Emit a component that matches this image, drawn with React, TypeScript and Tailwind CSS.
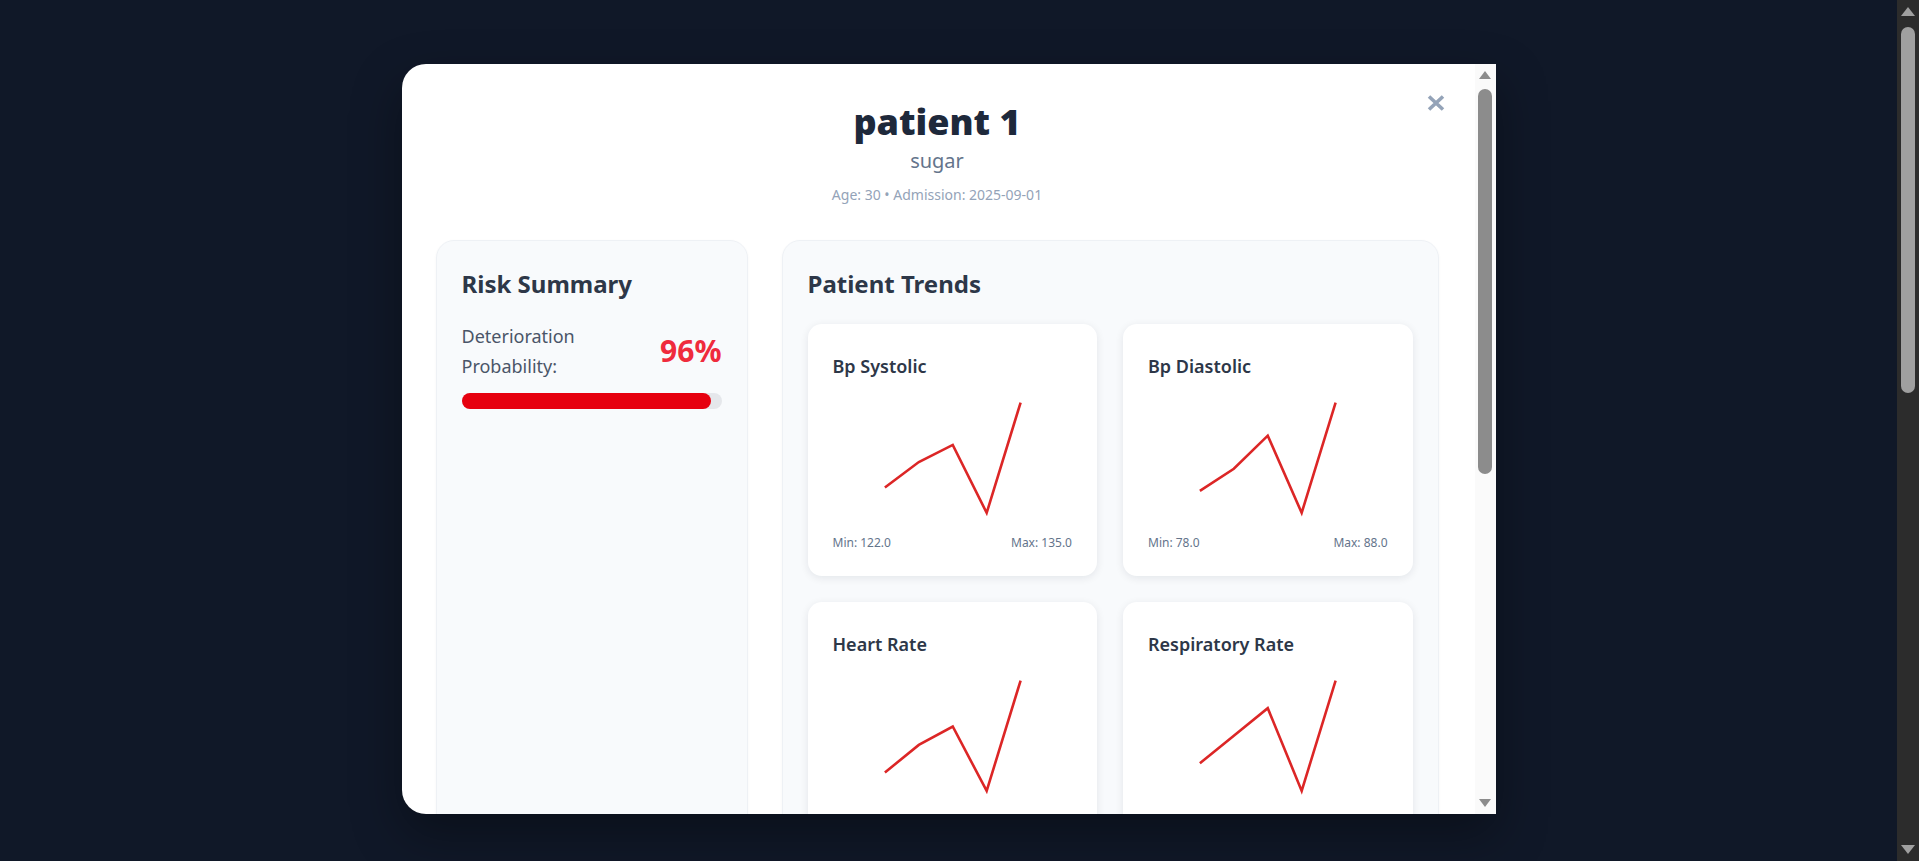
import React from "react";

type Metric = { name: string; values: number[] };

const metrics: Metric[] = [
  { name: "Bp Systolic", values: [125, 128, 130, 122, 135] },
  { name: "Bp Diastolic", values: [80, 82, 85, 78, 88] },
  { name: "Heart Rate", values: [80, 86, 90, 76, 100] },
  { name: "Respiratory Rate", values: [18, 20, 22, 16, 24] },
];

function Sparkline({ values }: { values: number[] }) {
  const min = Math.min(...values);
  const max = Math.max(...values);
  const pts = values
    .map((v, i) => {
      const x = 52 + i * 34;
      const y = 135 - ((v - min) / (max - min)) * 110.6;
      return `${x},${y.toFixed(1)}`;
    })
    .join(" ");
  return (
    <svg width="240" height="157" viewBox="0 0 240 157" className="block h-[157px] w-full">
      <polyline points={pts} fill="none" stroke="#dc2626" strokeWidth="2.6" strokeLinejoin="miter" />
    </svg>
  );
}

function TrendCard({ m }: { m: Metric }) {
  const min = Math.min(...m.values);
  const max = Math.max(...m.values);
  return (
    <div className="rounded-[14px] bg-white px-[25px] pb-[25px] pt-[30px] shadow-[0_2px_8px_rgba(15,23,42,0.09)]">
      <div className="text-[18px] font-semibold leading-[24px] text-[#2d3748]">{m.name}</div>
      <Sparkline values={m.values} />
      <div className="flex justify-between text-[12px] leading-[16px] text-[#64748b]">
        <span>Min: {min.toFixed(1)}</span>
        <span>Max: {max.toFixed(1)}</span>
      </div>
    </div>
  );
}

function ModalScrollbar() {
  return (
    <div className="flex w-[21px] shrink-0 flex-col items-center bg-[#fafafa]">
      <div className="mt-[7px] h-0 w-0 border-b-[8px] border-l-[6px] border-r-[6px] border-b-[#8c8c8c] border-l-transparent border-r-transparent" />
      <div className="mt-[10px] h-[385px] w-[14px] rounded-full bg-[#8c8c8c]" />
      <div className="mb-[7px] mt-auto h-0 w-0 border-l-[6px] border-r-[6px] border-t-[8px] border-l-transparent border-r-transparent border-t-[#8c8c8c]" />
    </div>
  );
}

function PageScrollbar() {
  return (
    <div className="flex h-full w-[22px] shrink-0 flex-col items-center bg-[#2c2c2c]">
      <div className="mt-[7px] h-0 w-0 border-b-[9px] border-l-[7px] border-r-[7px] border-b-[#a0a0a0] border-l-transparent border-r-transparent" />
      <div className="mt-[11px] h-[366px] w-[14px] rounded-full bg-[#a0a0a0]" />
      <div className="mb-[7px] mt-auto h-0 w-0 border-l-[7px] border-r-[7px] border-t-[9px] border-l-transparent border-r-transparent border-t-[#a0a0a0]" />
    </div>
  );
}

export default function App() {
  return (
    <div
      className="flex h-screen overflow-hidden bg-[#101828]"
      style={{ fontFamily: '"Noto Sans", "Open Sans", sans-serif' }}
    >
      <div className="flex flex-1 items-start justify-center pt-[64px]">
        <div className="flex h-[750px] w-[1094px] overflow-hidden rounded-l-[24px] bg-white shadow-[0_20px_50px_rgba(0,0,0,0.35)]">
          <div className="relative flex-1 overflow-hidden">
            <button className="absolute right-[30px] top-[31px] text-[#94a3b8]" aria-label="Close">
              <svg width="18" height="16" viewBox="0 0 18 16" className="block">
                <path d="M2 1.5 L16 14.5 M16 1.5 L2 14.5" stroke="#94a3b8" strokeWidth="3.6" fill="none" />
              </svg>
            </button>
            <div className="pl-[34px] pr-[36px] pt-[36px]">
              <div className="flex flex-col items-center text-center">
                <h2 className="text-[36px] font-black leading-[44px] text-[#1e293b]">patient 1</h2>
                <div className="mt-[3px] text-[20px] leading-[28px] text-[#64748b]">sugar</div>
                <div className="mt-[10px] text-[14px] leading-[20px] text-[#94a3b8]">
                  Age: 30 • Admission: 2025-09-01
                </div>
              </div>

              <div className="mt-[35px] flex items-stretch gap-[34px]">
                <div className="w-[312px] shrink-0 rounded-[18px] border border-[#eef1f5] bg-[#f8fafc] px-[25px] pt-[25px] shadow-[0_1px_3px_rgba(15,23,42,0.04)]">
                  <h3 className="text-[24px] font-bold leading-[36px] text-[#2d3748]">Risk Summary</h3>
                  <div className="mt-[19px] flex items-center justify-between gap-2">
                    <span className="text-[18px] leading-[30px] text-[#4a5568]">Deterioration Probability:</span>
                    <span className="text-[30px] font-bold leading-none text-[#ef2b3c]">96%</span>
                  </div>
                  <div className="mt-[12px] h-[16px] w-full rounded-full bg-[#e5e7eb]">
                    <div className="h-full rounded-full bg-[#e6000f]" style={{ width: "96%" }} />
                  </div>
                </div>

                <div className="flex-1 rounded-[18px] border border-[#eef1f5] bg-[#f8fafc] px-[25px] pb-[25px] pt-[25px] shadow-[0_1px_3px_rgba(15,23,42,0.04)]">
                  <h3 className="text-[24px] font-bold leading-[36px] text-[#2d3748]">Patient Trends</h3>
                  <div className="mt-[22px] grid grid-cols-2 gap-[26px]">
                    {metrics.map((m) => (
                      <TrendCard key={m.name} m={m} />
                    ))}
                  </div>
                </div>
              </div>
            </div>
          </div>
          <ModalScrollbar />
        </div>
      </div>
      <PageScrollbar />
    </div>
  );
}
